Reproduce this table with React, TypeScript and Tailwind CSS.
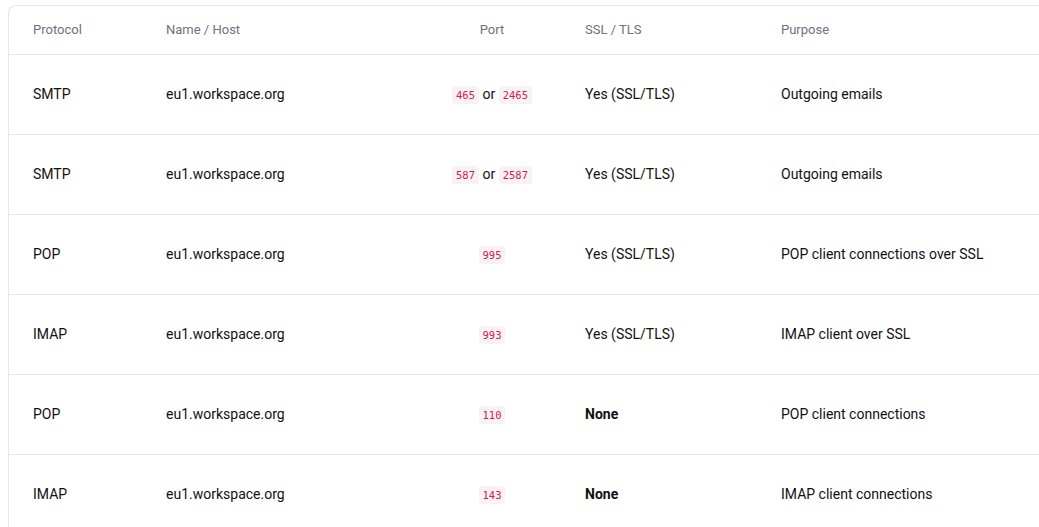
import React from "react";

type Row = {
  protocol: string;
  host: string;
  ports: string[];
  ssl: string;
  purpose: string;
};

const rows: Row[] = [
  { protocol: "SMTP", host: "eu1.workspace.org", ports: ["465", "2465"], ssl: "Yes (SSL/TLS)", purpose: "Outgoing emails" },
  { protocol: "SMTP", host: "eu1.workspace.org", ports: ["587", "2587"], ssl: "Yes (SSL/TLS)", purpose: "Outgoing emails" },
  { protocol: "POP", host: "eu1.workspace.org", ports: ["995"], ssl: "Yes (SSL/TLS)", purpose: "POP client connections over SSL" },
  { protocol: "IMAP", host: "eu1.workspace.org", ports: ["993"], ssl: "Yes (SSL/TLS)", purpose: "IMAP client over SSL" },
  { protocol: "POP", host: "eu1.workspace.org", ports: ["110"], ssl: "None", purpose: "POP client connections" },
  { protocol: "IMAP", host: "eu1.workspace.org", ports: ["143"], ssl: "None", purpose: "IMAP client connections" },
];

function Code({ children }: { children: React.ReactNode }) {
  return (
    <code className="rounded-[4px] bg-[#f9f2f4] px-[4px] py-[3px] font-['DejaVu_Sans_Mono',monospace] text-[10.5px] text-[#d1204f]">
      {children}
    </code>
  );
}

export default function App() {
  return (
    <div className="min-h-screen bg-white pl-2 pt-[5px] font-['Roboto',sans-serif] overflow-hidden">
      <div className="w-[1100px] rounded-tl-lg border-l border-t border-[#e8e8e8] bg-white">
        <table className="w-full table-fixed border-collapse text-left">
          <colgroup>
            <col className="w-[133px]" />
            <col className="w-[281px]" />
            <col className="w-[138px]" />
            <col className="w-[196px]" />
            <col />
          </colgroup>
          <thead>
            <tr className="h-[48px] border-b border-[#e8e8e8] text-[13px] text-[#6b7280]">
              <th className="pl-6 pb-px font-normal">Protocol</th>
              <th className="pl-6 pb-px font-normal">Name / Host</th>
              <th className="pb-px text-center font-normal">Port</th>
              <th className="pl-6 pb-px font-normal">SSL / TLS</th>
              <th className="pl-6 pb-px font-normal">Purpose</th>
            </tr>
          </thead>
          <tbody className="text-[14px] text-[#111]">
            {rows.map((r, i) => (
              <tr key={i} className="h-[80px] border-b border-[#e8e8e8] last:border-b-0">
                <td className="pl-6">{r.protocol}</td>
                <td className="pl-6">{r.host}</td>
                <td className="text-center">
                  {r.ports.length === 2 ? (
                    <>
                      <Code>{r.ports[0]}</Code> or <Code>{r.ports[1]}</Code>
                    </>
                  ) : (
                    <Code>{r.ports[0]}</Code>
                  )}
                </td>
                <td className={r.ssl === "None" ? "pl-6 font-bold" : "pl-6"}>{r.ssl}</td>
                <td className="pl-6">{r.purpose}</td>
              </tr>
            ))}
          </tbody>
        </table>
      </div>
    </div>
  );
}
